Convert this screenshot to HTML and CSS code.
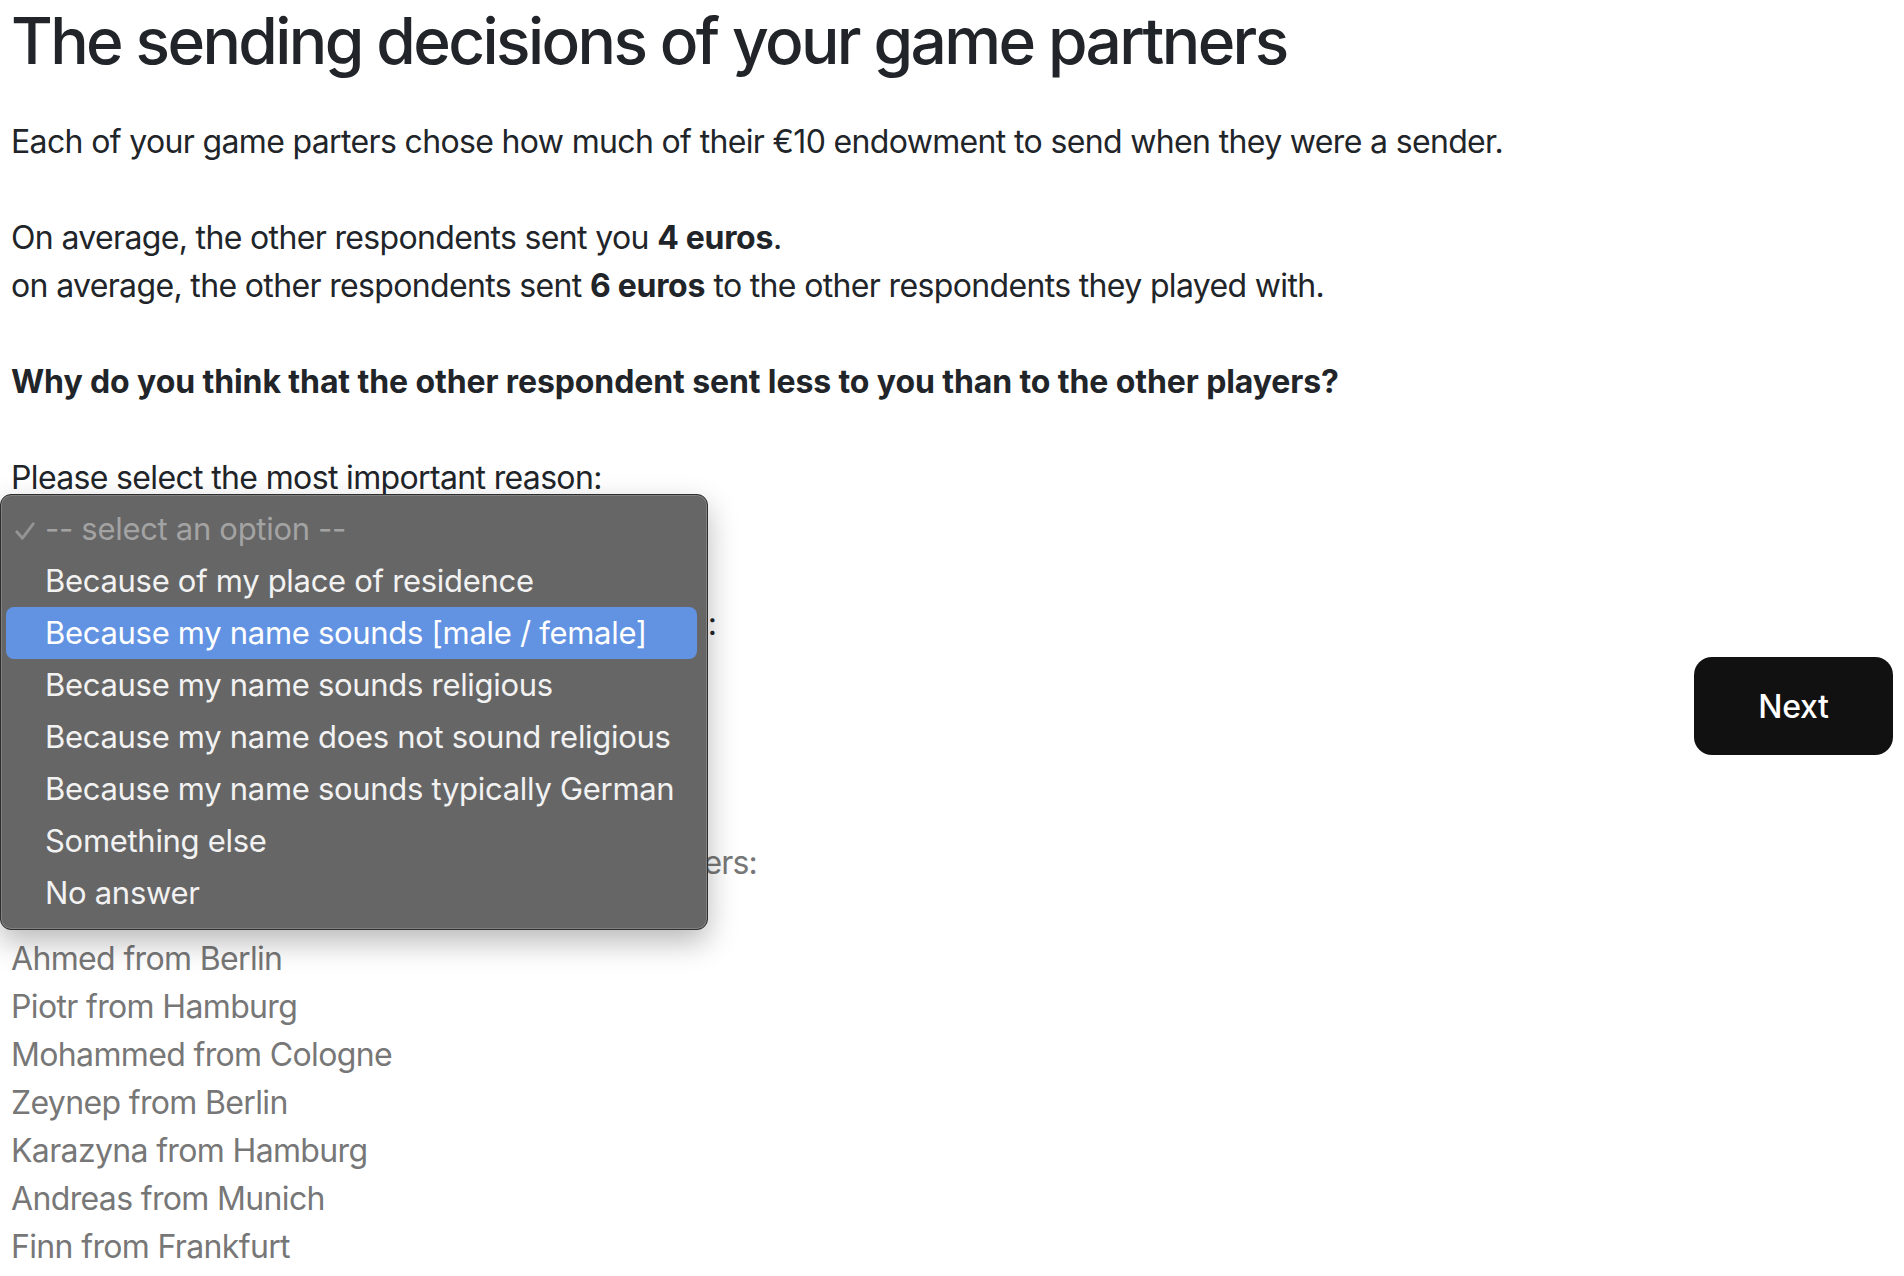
FILE: index.html
```html
<!DOCTYPE html>
<html lang="en">
<head>
<meta charset="utf-8">
<title>The sending decisions of your game partners</title>
<link rel="stylesheet" href="styles.css">
</head>
<body>
<main class="page">
  <h1 class="title">The sending decisions of your game partners</h1>
  <p class="para">Each of your game parters chose how much of their €10 endowment to send when they were a sender.</p>
  <p class="para">On average, the other respondents sent you <b>4 euros</b>.<br>on average, the other respondents sent <b>6 euros</b> to the other respondents they played with.</p>
  <p class="para"><b class="strong-q">Why do you think that the other respondent sent less to you than to the other players?</b></p>
  <p class="para tight">Please select the most important reason:</p>
  <div class="select-box">-- select an option --</div>
  <p class="label">If something else, please specify your reasoning<span class="colon">:</span></p>
  <div class="actions">
    <button class="next-btn" type="button">Next</button>
  </div>
  <p class="muted para partners-line">You played these games with the following partners:</p>
  <ul class="names">
    <li>Ahmed from Berlin</li>
    <li>Piotr from Hamburg</li>
    <li>Mohammed from Cologne</li>
    <li>Zeynep from Berlin</li>
    <li>Karazyna from Hamburg</li>
    <li>Andreas from Munich</li>
    <li>Finn from Frankfurt</li>
  </ul>
</main>
<div class="popup">
  <div class="opt placeholder"><svg class="check" width="20" height="18" viewBox="0 0 20 18"><path d="M1.8 9.8 L7.5 16.2 L18.2 1.8" fill="none" stroke="#949494" stroke-width="2.8" stroke-linecap="round" stroke-linejoin="round"/></svg>-- select an option --</div>
  <div class="opt">Because of my place of residence</div>
  <div class="opt active">Because my name sounds [male / female]</div>
  <div class="opt">Because my name sounds religious</div>
  <div class="opt">Because my name does not sound religious</div>
  <div class="opt">Because my name sounds typically German</div>
  <div class="opt">Something else</div>
  <div class="opt">No answer</div>
</div>
</body>
</html>
```
FILE: styles.css
```css
html, body {
  margin: 0;
  padding: 0;
  background: #ffffff;
}
body {
  font-family: Inter, "Noto Sans", sans-serif;
  font-size: 32px;
  line-height: 48px;
  color: #212529;
  letter-spacing: -0.65px;
  overflow: hidden;
  height: 1276px;
  position: relative;
}
.page {
  padding: 2px 11px 0 11px;
}
.title {
  font-size: 64px;
  line-height: 77px;
  font-weight: 500;
  margin: 0 0 39px 0;
  letter-spacing: -2.6px;
}
.para {
  margin: 0 0 48px 0;
}
.para.tight {
  margin-bottom: 0;
}
b {
  font-weight: 700;
  letter-spacing: -0.3px;
}
.strong-q {
  letter-spacing: -0.1px;
}
.select-box {
  height: 66px;
  border: 1px solid #ced4da;
  border-radius: 8px;
  width: 680px;
  box-sizing: border-box;
  padding: 8px 16px;
}
.label {
  margin: 32px 0 0 0;
  letter-spacing: -0.8px;
}
.colon {
  padding-left: 3px;
}
.actions {
  display: flex;
  justify-content: flex-end;
  margin-top: 9px;
}
.next-btn {
  width: 199px;
  height: 98px;
  background: #111111;
  color: #ffffff;
  border: none;
  border-radius: 18px;
  font-family: Inter, "Noto Sans", sans-serif;
  font-size: 32px;
  font-weight: 500;
  letter-spacing: -0.3px;
}
.muted {
  color: #777777;
  margin-top: 84px;
}
.partners-line {
  letter-spacing: -0.87px;
}
.names {
  list-style: none;
  margin: 0;
  padding: 0;
  color: #777777;
}
.popup {
  position: absolute;
  left: 0;
  top: 494px;
  width: 708px;
  height: 436px;
  box-sizing: border-box;
  padding: 8px 10px 10px 5px;
  background: #666666;
  border: 1px solid #2e2e2e;
  border-radius: 11px;
  box-shadow: inset 0 0 0 1px rgba(255,255,255,0.18), 0 12px 30px rgba(0,0,0,0.28);
  font-size: 31px;
  line-height: 52px;
  letter-spacing: -0.3px;
  color: #f2f2f2;
}
.opt {
  height: 52px;
  padding-left: 39px;
  border-radius: 8px;
  position: relative;
  white-space: nowrap;
}
.opt.placeholder {
  color: #a3a3a3;
}
.check {
  position: absolute;
  left: 9px;
  top: 19px;
}
.opt.active {
  background: #6293e3;
  color: #ffffff;
}
```
